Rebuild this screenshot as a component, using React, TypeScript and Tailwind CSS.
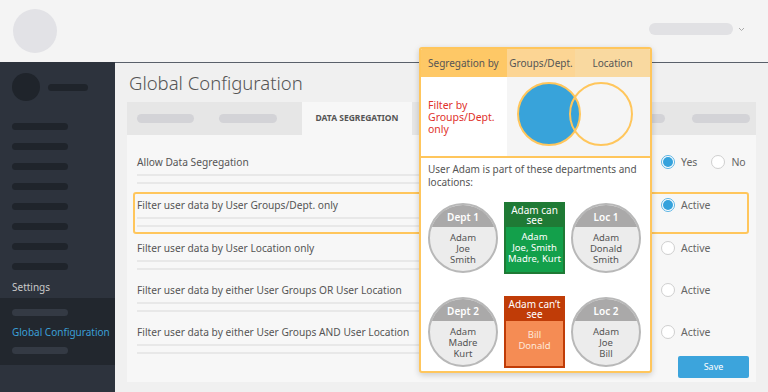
import React from "react";

const Pill = ({ className }: { className: string }) => <div className={`rounded-full ${className}`} />;

function Radio({ checked }: { checked?: boolean }) {
  return checked ? (
    <span className="inline-flex w-[14px] h-[14px] rounded-full border border-[#5ab4e4] bg-white items-center justify-center shrink-0">
      <span className="w-[10px] h-[10px] rounded-full bg-[#35a2dc]" />
    </span>
  ) : (
    <span className="inline-block w-[14px] h-[14px] rounded-full border border-[#cfcfcf] bg-white shrink-0" />
  );
}

function Row({ label, children, highlight }: { label: string; children: React.ReactNode; highlight?: boolean }) {
  return (
    <div
      className={`flex pl-[2px] rounded-[3px] border-2 ${
        highlight ? "border-[#ffc65c] pt-[3px] pb-[5px]" : "border-transparent"
      }`}
    >
      <div className="w-[522px]">
        <p className="text-[10.2px] leading-[16px] text-[#555]">{label}</p>
        <div className="mt-[4px] h-[2px] w-[500px] bg-[#e8e8e8]" />
        <div className="mt-[6px] h-[2px] w-[500px] bg-[#e8e8e8]" />
      </div>
      <div className="ml-[2px] flex items-start gap-[6px] pt-[1px] text-[10.5px] leading-[14px] text-[#666]">{children}</div>
    </div>
  );
}

function Member({ title, names }: { title: string; names: string[] }) {
  return (
    <div className="w-[70px] h-[70px] rounded-full border-2 border-[#b8b8b8] overflow-hidden flex flex-col bg-[#ececec]">
      <div className="h-[22px] shrink-0 bg-[#aaa9a9] flex items-end justify-center pb-[2px] text-[10px] font-semibold text-white">{title}</div>
      <div className="flex flex-col items-center pt-[5px] text-[9.5px] leading-[11px] text-[#555]">
        {names.map((n) => (
          <span key={n}>{n}</span>
        ))}
      </div>
    </div>
  );
}

function SeeBox({ title, names, head, body, text }: { title: string[]; names: string[]; head: string; body: string; text: string }) {
  return (
    <div className={`w-[61px] h-[72px] flex flex-col ${head}`}>
      <div className="h-[25px] shrink-0 flex flex-col items-center justify-center text-[10px] leading-[10px] text-white">
        {title.map((t) => (
          <span key={t}>{t}</span>
        ))}
      </div>
      <div className={`flex-1 mx-[2px] mb-[2px] flex flex-col items-center text-[9.5px] leading-[11px] ${body} ${text}`}>
        {names.map((n) => (
          <span key={n}>{n}</span>
        ))}
      </div>
    </div>
  );
}

function Popup() {
  return (
    <div className="absolute left-[419px] top-[47px] w-[233px] h-[326px] border-2 border-[#ffc65c] rounded-[3px] bg-white shadow-[0_2px_6px_rgba(0,0,0,0.18)] overflow-hidden flex flex-col">
      <div className="flex h-[28px] text-[10px] text-[#555] shrink-0">
        <div className="w-[86px] bg-[#fec866] flex items-center pl-[7px]">Segregation by</div>
        <div className="w-[68px] bg-[#fcd594] flex items-center justify-center">Groups/Dept.</div>
        <div className="flex-1 bg-[#f9d9a0] flex items-center justify-center">Location</div>
      </div>
      <div className="flex h-[81px] border-b-2 border-[#ffc65c] shrink-0">
        <div className="w-[86px] pl-[7px] pt-[22px] text-[10.5px] leading-[12px] text-[#e0322c]">
          Filter by
          <br />
          Groups/Dept.
          <br />
          only
        </div>
        <div className="flex-1 bg-[#f5f5f5] flex items-center">
          <svg width="143" height="81" viewBox="0 0 143 81">
            <circle cx="42" cy="38" r="31" fill="#38a3da" stroke="#ffc65c" strokeWidth="2" />
            <circle cx="94" cy="38" r="31" fill="none" stroke="#ffc65c" strokeWidth="2" />
          </svg>
        </div>
      </div>
      <p className="px-[7px] pt-[5px] text-[10px] leading-[13px] text-[#555]">
        User Adam is part of these departments and locations:
      </p>
      <div className="grid grid-cols-[70px_61px_70px] gap-x-[6px] gap-y-[22px] px-[7px] pt-[13px] items-center">
        <Member title="Dept 1" names={["Adam", "Joe", "Smith"]} />
        <SeeBox
          title={["Adam can", "see"]}
          names={["Adam", "Joe, Smith", "Madre, Kurt"]}
          head="bg-[#1f7a35]"
          body="bg-[#13a04b] pt-[4px]"
          text="text-white"
        />
        <Member title="Loc 1" names={["Adam", "Donald", "Smith"]} />
        <Member title="Dept 2" names={["Adam", "Madre", "Kurt"]} />
        <SeeBox
          title={["Adam can\u2019t", "see"]}
          names={["Bill", "Donald"]}
          head="bg-[#c03c07]"
          body="bg-[#f58c54] pt-[8px]"
          text="text-[#fde8da]"
        />
        <Member title="Loc 2" names={["Adam", "Joe", "Bill"]} />
      </div>
    </div>
  );
}

export default function App() {
  return (
    <div className="relative w-[768px] h-[392px] overflow-hidden bg-[#f4f4f4] font-['Noto_Sans',sans-serif]">
      <header className="h-[62px] flex items-center justify-between pl-[13px] pr-[23px]">
        <div className="w-[44px] h-[44px] rounded-full bg-[#e2e2e6]" />
        <div className="flex items-center gap-[5px] -mt-[4px]">
          <Pill className="w-[84px] h-[12px] bg-[#e1e1e4]" />
          <svg width="7" height="5" viewBox="0 0 7 5">
            <path d="M1 1l2.5 2.5L6 1" fill="none" stroke="#aaa" strokeWidth="1" />
          </svg>
        </div>
      </header>

      <div className="flex h-[330px]">
        <aside className="w-[115px] bg-[#2d333d] flex flex-col">
          <div className="flex items-center gap-[8px] pl-[12px] pt-[11px]">
            <div className="w-[28px] h-[28px] rounded-full bg-[#1f242b]" />
            <Pill className="w-[40px] h-[7px] bg-[#1f242b]" />
          </div>
          <div className="flex flex-col gap-[13px] pl-[12px] pt-[22px]">
            {[0, 1, 2, 3, 4, 5, 6, 7].map((i) => (
              <Pill key={i} className="w-[56px] h-[7px] bg-[#1f242b]" />
            ))}
          </div>
          <p className="pl-[12px] pt-[10px] text-[10px] leading-[14px] text-[#c9c9c9]">Settings</p>
          <div className="mt-[4px] h-[67px] bg-[#22272e] pl-[12px] pt-[11px] flex flex-col">
            <Pill className="w-[56px] h-[7px] bg-[#343a44]" />
            <p className="pt-[9px] text-[10px] leading-[14px] text-[#3b9fd6]">Global Configuration</p>
            <Pill className="mt-[8px] w-[56px] h-[7px] bg-[#343a44]" />
          </div>
        </aside>

        <main className="flex-1 border-t border-[#59606a] bg-[#f0f0f0] pl-[12px] pr-[12px] pt-[6px]">
          <h1 className="pl-[2px] text-[18.5px] leading-[28px] font-light text-[#555]">Global Configuration</h1>
          <section className="mt-[5px] w-[629px] h-[280px] bg-[#f7f7f7]">
            <div className="flex items-center h-[33px] bg-[#e6e6e6] pl-[10px] pr-[6px]">
              <Pill className="w-[57px] h-[9px] bg-[#d3d3d7]" />
              <Pill className="ml-[25px] w-[58px] h-[9px] bg-[#d3d3d7]" />
              <div className="ml-[25px] w-[110px] h-full bg-[#f7f7f7] flex items-center justify-center text-[8.5px] font-bold text-[#555]">
                DATA SEGREGATION
              </div>
              <Pill className="ml-auto w-[58px] h-[9px] bg-[#d3d3d7]" />
              <Pill className="ml-[27px] w-[58px] h-[9px] bg-[#d3d3d7]" />
            </div>

            <div className="flex flex-col pl-[6px] pr-[7px] pt-[17px]">
              <Row label="Allow Data Segregation">
                <Radio checked />
                <span>Yes</span>
                <span className="ml-[8px] flex">
                  <Radio />
                </span>
                <span>No</span>
              </Row>
              <div className="mt-[6px]">
                <Row label="Filter user data by User Groups/Dept. only" highlight>
                  <Radio checked />
                  <span>Active</span>
                </Row>
              </div>
              <div className="mt-[4px]">
                <Row label="Filter user data by User Location only">
                  <Radio />
                  <span>Active</span>
                </Row>
              </div>
              <div className="mt-[8px]">
                <Row label="Filter user data by either User Groups OR User Location">
                  <Radio />
                  <span>Active</span>
                </Row>
              </div>
              <div className="mt-[8px]">
                <Row label="Filter user data by either User Groups AND User Location">
                  <Radio />
                  <span>Active</span>
                </Row>
              </div>
              <div className="flex justify-end">
                <button className="w-[71px] h-[22px] rounded-[2px] bg-[#3ca4dc] text-[9px] text-white">Save</button>
              </div>
            </div>
          </section>
        </main>
      </div>

      <Popup />
    </div>
  );
}
